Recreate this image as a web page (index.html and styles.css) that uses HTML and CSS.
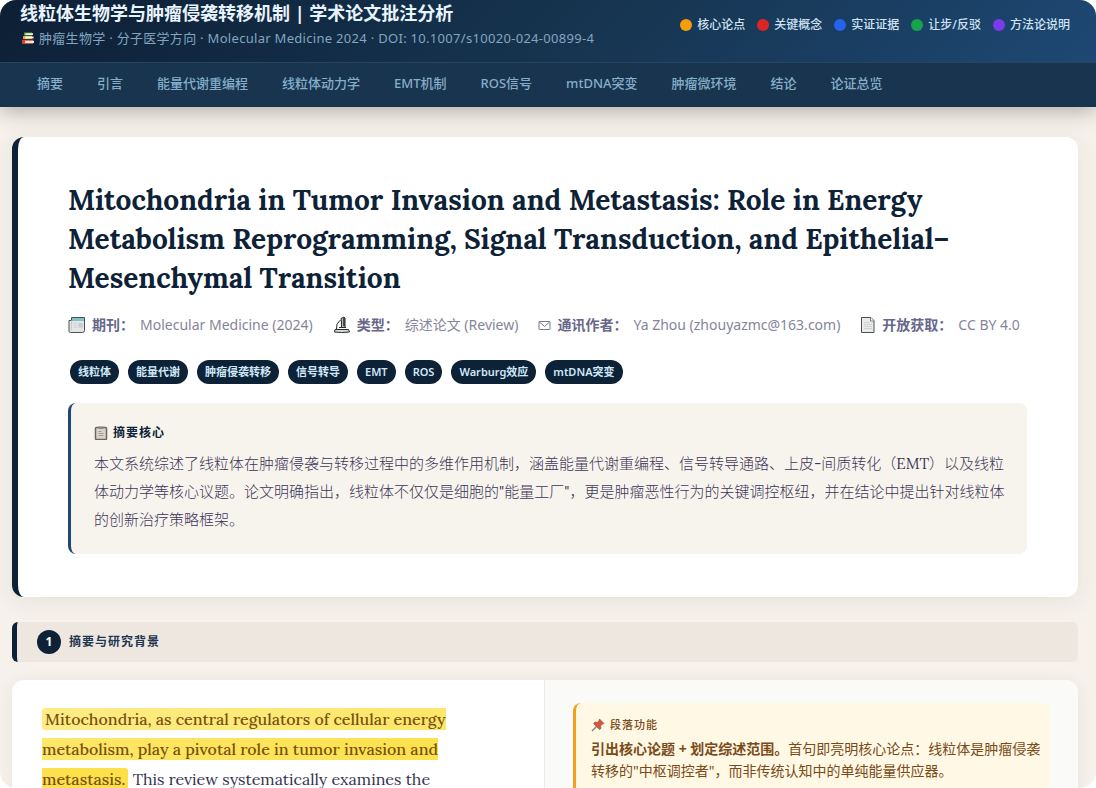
FILE: index.html
```html
<!DOCTYPE html>
<html lang="zh-CN">
<head>
<meta charset="utf-8">
<meta name="viewport" content="width=device-width, initial-scale=1">
<title>线粒体生物学与肿瘤侵袭转移机制 | 学术论文批注分析</title>
<link rel="stylesheet" href="styles.css">
</head>
<body>
<div class="page">
  <header class="site-header">
    <div class="topbar">
      <div class="brand">
        <h1 class="brand-title">线粒体生物学与肿瘤侵袭转移机制 | 学术论文批注分析</h1>
        <p class="brand-sub">
          <svg class="icon-books" viewBox="0 0 14 14" aria-hidden="true">
            <path d="M3 1.5h8v3H3z" fill="#58a43c"/><path d="M4.5 2.2H12v1.8H4.5z" fill="#f3efd9"/>
            <path d="M2 5h9v3H2z" fill="#d9a441"/><path d="M4 5.6h8.5v1.8H4z" fill="#fff8e4"/>
            <path d="M1 8.7h11V13H2Q1 13 1 12z" fill="#d8452f"/><path d="M4 9.8h9v2.2H4z" fill="#f4eadb"/>
          </svg>
          <span>肿瘤生物学 · 分子医学方向 · Molecular Medicine 2024 · DOI: 10.1007/s10020-024-00899-4</span>
        </p>
      </div>
      <ul class="legend">
        <li><span class="dot dot-amber"></span>核心论点</li>
        <li><span class="dot dot-red"></span>关键概念</li>
        <li><span class="dot dot-blue"></span>实证证据</li>
        <li><span class="dot dot-green"></span>让步/反驳</li>
        <li><span class="dot dot-violet"></span>方法论说明</li>
      </ul>
    </div>
    <nav class="nav">
      <a href="#s1">摘要</a>
      <a href="#s2">引言</a>
      <a href="#s3">能量代谢重编程</a>
      <a href="#s4">线粒体动力学</a>
      <a href="#s5">EMT机制</a>
      <a href="#s6">ROS信号</a>
      <a href="#s7">mtDNA突变</a>
      <a href="#s8">肿瘤微环境</a>
      <a href="#s9">结论</a>
      <a href="#s10">论证总览</a>
    </nav>
  </header>

  <main class="content">
    <article class="paper">
      <h2 class="paper-title">Mitochondria in Tumor Invasion and Metastasis: Role in Energy Metabolism Reprogramming, Signal Transduction, and Epithelial–<wbr>Mesenchymal Transition</h2>
      <div class="meta">
        <div class="meta-item">
          <svg class="icon-l" viewBox="0 0 18 18" aria-hidden="true">
            <path d="M3.5 1.5h13v13q0 2-2 2h-12q-1.500 0-1.500-1.500V4.500h2.500z" fill="#e3e6e6" stroke="#4b4f50"/>
            <path d="M4 2h12v3H4z" fill="#7fc3cb"/><path d="M3.500 4.500v10" stroke="#c9cccd"/>
            <path d="M5.500 7.500h4M5.500 9.500h4M5.500 11.500h4" stroke="#d2d5d6"/><path d="M10.500 7h4.500v4.500h-4.500z" fill="#c9cdce"/>
          </svg>
          <strong>期刊：</strong><span>Molecular Medicine (2024)</span>
        </div>
        <div class="meta-item">
          <svg class="icon-l" viewBox="0 0 18 18" fill="none" stroke="#2b2c2c" aria-hidden="true">
            <path d="M8 2.500l3-1.500 1 1v9.500H8.500V6z" fill="#b5baba"/><path d="M11 2v8" stroke-width="1.500"/>
            <path d="M7.500 4Q2.500 7.500 3.500 13"/><path d="M2 13.500h13.500l1 2.500q-8 1-15 0z" fill="#d9dbda"/><path d="M6 11.500h7"/>
          </svg>
          <strong>类型：</strong><span>综述论文 (Review)</span>
        </div>
        <div class="meta-item">
          <svg class="icon-s" viewBox="0 0 13 13" fill="none" stroke="#77768c" aria-hidden="true">
            <rect x="1" y="2.500" width="11" height="8" rx=".5"/><path d="M1.500 3l5 4.500 5-4.500"/>
          </svg>
          <strong>通讯作者：</strong><span>Ya Zhou (zhouyazmc@163.com)</span>
        </div>
        <div class="meta-item">
          <svg class="icon-m" viewBox="0 0 16 18" aria-hidden="true">
            <path d="M1.500 1.500h9.500l3 3v12H1.500z" fill="#e9eaea" stroke="#4e5050"/><path d="M10.500 1.500V5H14" fill="#fff" stroke="#77797a"/>
            <path d="M4 6.500h6M4 8.500h8M4 10.500h8M4 12.500h8" stroke="#cfd1d2"/>
          </svg>
          <strong>开放获取：</strong><span>CC BY 4.0</span>
        </div>
      </div>
      <ul class="tags">
        <li>线粒体</li><li>能量代谢</li><li>肿瘤侵袭转移</li><li>信号转导</li><li>EMT</li><li>ROS</li><li>Warburg效应</li><li>mtDNA突变</li>
      </ul>
      <section class="abstract">
        <h3 class="abstract-title">
          <svg class="icon-clip" viewBox="0 0 14 14" aria-hidden="true">
            <rect x="1.500" y="1.500" width="11" height="12" rx="1" fill="#d9d4ca" stroke="#6f655b" stroke-width="1.500"/>
            <path d="M4.500.5h5v2.500h-5z" fill="#8b8680"/><path d="M4.500 5.500h3M4.500 7.500h5M4.500 9.500h5" stroke="#a39d94"/>
          </svg>
          摘要核心
        </h3>
        <p class="abstract-text">本文系统综述了线粒体在肿瘤侵袭与转移过程中的多维作用机制，涵盖能量代谢重编程、信号转导通路、上皮-间质转化（EMT）以及线粒体动力学等核心议题。论文明确指出，线粒体不仅仅是细胞的"能量工厂"，更是肿瘤恶性行为的关键调控枢纽，并在结论中提出针对线粒体的创新治疗策略框架。</p>
      </section>
    </article>

    <h3 class="section-head" id="s1"><span class="section-num">1</span>摘要与研究背景</h3>

    <section class="split">
      <div class="original">
        <p><mark class="hl">Mitochondria, as central regulators of cellular energy<br>metabolism, play a pivotal role in tumor invasion and<br>metastasis.</mark> This review systematically examines the</p>
      </div>
      <div class="notes">
        <div class="note">
          <h4 class="note-title">
            <svg class="icon-pin" viewBox="0 0 14 14" aria-hidden="true">
              <path d="M5.500 8.500L1 13" stroke="#7d8589" stroke-width="1.500"/>
              <path d="M8.500 1L13 5.500l-1.500.5-2 2 .5 2.500-1.500 1L2.500 5.500 4 4l2.500.5 1.500-2z" fill="#d9573f" stroke="#8d4a3d" stroke-width=".6"/>
            </svg>
            段落功能
          </h4>
          <p class="note-text"><strong>引出核心论题 + 划定综述范围。</strong>首句即亮明核心论点：线粒体是肿瘤侵袭<br>转移的"中枢调控者"，而非传统认知中的单纯能量供应器。</p>
        </div>
      </div>
    </section>
  </main>
</div>
</body>
</html>
```
FILE: styles.css
```css
* { box-sizing: border-box; }

body, h1, h2, h3, h4, p, ul { margin: 0; padding: 0; }

ul { list-style: none; }

body {
  background: #fff;
  font-family: "Noto Sans", "Noto Sans CJK SC", sans-serif;
  color: #1a1a2e;
}

.page {
  height: 100vh;
  overflow: hidden;
  border-radius: 16px;
  background: #f6f2eb;
}

.site-header {
  position: relative;
  background: linear-gradient(135deg, #0d1f35 0%, #16344f 50%, #1e4976 100%);
  box-shadow: 0 4px 20px rgba(0, 0, 0, .3);
}

.topbar {
  display: flex;
  justify-content: space-between;
  align-items: center;
  padding: 0 26px 14px 20px;
}

.brand-title {
  font-size: 18px;
  line-height: 26px;
  font-weight: 700;
  color: #e8f4fd;
}

.brand-sub {
  display: flex;
  align-items: center;
  gap: 4px;
  margin-top: 2px;
  font-size: 13px;
  line-height: 20px;
  letter-spacing: .3px;
  color: #83a5c0;
}

.icon-books { width: 14px; height: 14px; margin-left: 1px; }

.legend {
  display: flex;
  gap: 12px;
  padding-top: 2px;
  font-size: 12px;
  line-height: 20px;
  font-weight: 500;
  color: #cfe3f2;
}

.legend li { display: flex; align-items: center; gap: 5px; }

.dot { width: 12px; height: 12px; border-radius: 50%; }
.dot-amber { background: #f59e0b; }
.dot-red { background: #dc2626; }
.dot-blue { background: #2563eb; }
.dot-green { background: #16a34a; }
.dot-violet { background: #7c3aed; }

.nav {
  display: flex;
  padding: 0 20px;
  background: #18344f;
  border-top: 1px solid #264560;
}

.nav a {
  padding: 10px 17px 14px;
  font-size: 13px;
  line-height: 20px;
  font-weight: 500;
  color: #85aeca;
  text-decoration: none;
}

.content { padding: 30px 18px 0 12px; }

.paper {
  padding: 44px 51px 43px 50px;
  background: #fff;
  border-left: 6px solid #0d2137;
  border-radius: 12px;
  box-shadow: 0 4px 24px rgba(13, 33, 55, .08);
}

.paper-title {
  font-family: Lora, "Liberation Serif", serif;
  font-size: 28px;
  line-height: 39px;
  font-weight: 700;
  color: #0d2137;
}

.meta {
  display: flex;
  gap: 20px;
  margin-top: 17px;
  font-size: 14px;
  line-height: 20px;
  color: #85859a;
  white-space: nowrap;
}

.meta-item { display: flex; align-items: center; gap: 6px; }
.meta-item strong { font-weight: 700; color: #67678a; }

.icon-l { width: 18px; height: 18px; }
.icon-m { width: 16px; height: 18px; }
.icon-s { width: 13px; height: 13px; }

.tags {
  display: flex;
  flex-wrap: wrap;
  gap: 9px;
  margin-top: 25px;
  padding-left: 2px;
}

.tags li {
  padding: 0 8px;
  border-radius: 12px;
  background: #0d2137;
  color: #cfe8f8;
  font-size: 11px;
  line-height: 24px;
  font-weight: 600;
}

.abstract {
  margin-top: 19px;
  padding: 21px 20px 20px 23px;
  background: #f7f4ed;
  border-left: 3px solid #1e4976;
  border-radius: 8px;
}

.abstract-title {
  display: flex;
  align-items: center;
  gap: 5px;
  font-size: 12px;
  line-height: 18px;
  font-weight: 700;
  letter-spacing: 1px;
  color: #0d2137;
}

.icon-clip { width: 14px; height: 14px; }

.abstract-text {
  margin-top: 8px;
  font-family: Lora, "Noto Sans CJK SC", serif;
  font-size: 15px;
  line-height: 28px;
  font-weight: 300;
  color: #3d3558;
}

.section-head {
  display: flex;
  align-items: center;
  gap: 8px;
  margin-top: 25px;
  padding: 8px 20px;
  background: #ede7e0;
  border-left: 5px solid #0d2137;
  border-radius: 6px;
  font-size: 12px;
  line-height: 24px;
  font-weight: 600;
  letter-spacing: 1px;
  color: #1f3550;
}

.section-num {
  width: 24px;
  border-radius: 50%;
  background: #0d2137;
  color: #fff;
  font-size: 12px;
  font-weight: 700;
  letter-spacing: 0;
  text-align: center;
}

.split {
  display: grid;
  grid-template-columns: 1fr 1fr;
  margin-top: 18px;
  min-height: 240px;
  background: #fff;
  border-radius: 12px;
  box-shadow: 0 2px 16px rgba(13, 33, 55, .07);
  overflow: hidden;
}

.original {
  padding: 24px 30px;
  border-right: 1px solid #ebebe8;
  font-family: Lora, "Liberation Serif", serif;
  font-size: 16px;
  line-height: 30px;
  color: #333350;
  white-space: nowrap;
}

.hl {
  padding: 1px 3px;
  border-radius: 3px;
  background: linear-gradient(90deg, #fdec85, #fde047);
  color: #78500f;
  font-weight: 500;
}

.notes { padding: 23px 28px; background: #fafaf8; }

.note {
  min-height: 160px;
  padding: 13px 8px 13px 15px;
  background: #fef8e4;
  border-left: 3px solid #f0a01c;
  border-radius: 8px;
  color: #7a4a18;
}

.note-title {
  display: flex;
  align-items: center;
  gap: 5px;
  font-size: 11px;
  line-height: 18px;
  font-weight: 500;
  letter-spacing: 1px;
}

.icon-pin { width: 14px; height: 14px; }

.note-text {
  margin-top: 4px;
  font-size: 14px;
  line-height: 22px;
  white-space: nowrap;
}
```
